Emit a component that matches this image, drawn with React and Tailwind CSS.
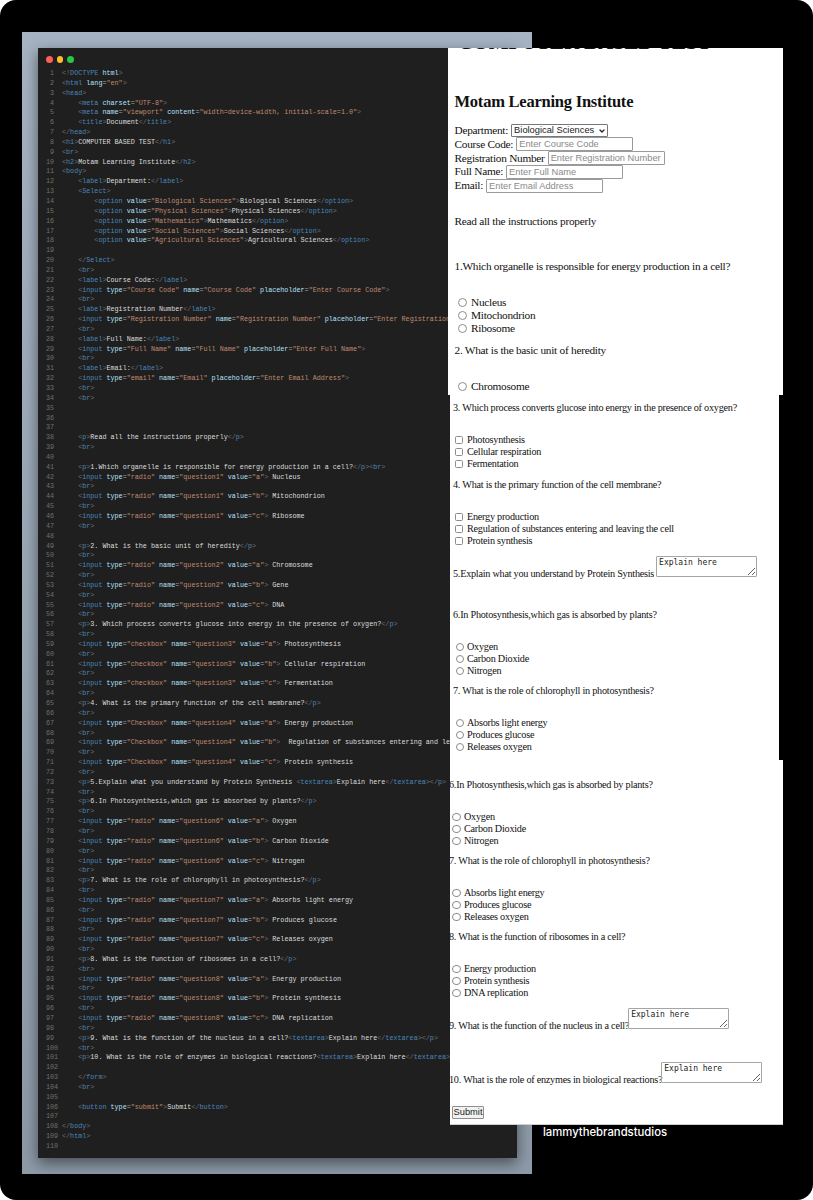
import React from 'react';
import { ChevronDown } from 'lucide-react';

const code = `<!DOCTYPE html>
<html lang="en">
<head>
    <meta charset="UTF-8">
    <meta name="viewport" content="width=device-width, initial-scale=1.0">
    <title>Document</title>
</head>
<h1>COMPUTER BASED TEST</h1>
<br>
<h2>Motam Learning Institute</h2>
<body>
    <label>Department:</label>
    <Select>
        <option value="Biological Sciences">Biological Sciences</option>
        <option value="Physical Sciences">Physical Sciences</option>
        <option value="Mathematics">Mathematics</option>
        <option value="Social Sciences">Social Sciences</option>
        <option value="Agricultural Sciences">Agricultural Sciences</option>

    </Select>
    <br>
    <label>Course Code:</label>
    <input type="Course Code" name="Course Code" placeholder="Enter Course Code">
    <br>
    <label>Registration Number</label>
    <input type="Registration Number" name="Registration Number" placeholder="Enter Registration Number">
    <br>
    <label>Full Name:</label>
    <input type="Full Name" name="Full Name" placeholder="Enter Full Name">
    <br>
    <label>Email:</label>
    <input type="email" name="Email" placeholder="Enter Email Address">
    <br>
    <br>



    <p>Read all the instructions properly</p>
    <br>

    <p>1.Which organelle is responsible for energy production in a cell?</p><br>
    <input type="radio" name="question1" value="a"> Nucleus
    <br>
    <input type="radio" name="question1" value="b"> Mitochondrion
    <br>
    <input type="radio" name="question1" value="c"> Ribosome
    <br>

    <p>2. What is the basic unit of heredity</p>
    <br>
    <input type="radio" name="question2" value="a"> Chromosome
    <br>
    <input type="radio" name="question2" value="b"> Gene
    <br>
    <input type="radio" name="question2" value="c"> DNA
    <br>
    <p>3. Which process converts glucose into energy in the presence of oxygen?</p>
    <br>
    <input type="checkbox" name="question3" value="a"> Photosynthesis
    <br>
    <input type="checkbox" name="question3" value="b"> Cellular respiration
    <br>
    <input type="checkbox" name="question3" value="c"> Fermentation
    <br>
    <p>4. What is the primary function of the cell membrane?</p>
    <br>
    <input type="Checkbox" name="question4" value="a"> Energy production
    <br>
    <input type="Checkbox" name="question4" value="b">  Regulation of substances entering and leaving the cell
    <br>
    <input type="Checkbox" name="question4" value="c"> Protein synthesis
    <br>
    <p>5.Explain what you understand by Protein Synthesis <textarea>Explain here</textarea></p>
    <br>
    <p>6.In Photosynthesis,which gas is absorbed by plants?</p>
    <br>
    <input type="radio" name="question6" value="a"> Oxygen
    <br>
    <input type="radio" name="question6" value="b"> Carbon Dioxide
    <br>
    <input type="radio" name="question6" value="c"> Nitrogen
    <br>
    <p>7. What is the role of chlorophyll in photosynthesis?</p>
    <br>
    <input type="radio" name="question7" value="a"> Absorbs light energy
    <br>
    <input type="radio" name="question7" value="b"> Produces glucose
    <br>
    <input type="radio" name="question7" value="c"> Releases oxygen
    <br>
    <p>8. What is the function of ribosomes in a cell?</p>
    <br>
    <input type="radio" name="question8" value="a"> Energy production
    <br>
    <input type="radio" name="question8" value="b"> Protein synthesis
    <br>
    <input type="radio" name="question8" value="c"> DNA replication
    <br>
    <p>9. What is the function of the nucleus in a cell?<textarea>Explain here</textarea></p>
    <br>
    <p>10. What is the role of enzymes in biological reactions?<textarea>Explain here</textarea></p>

    </form>
    <br>

    <button type="submit">Submit</button>

</body>
</html>
`.split('\n');

const Attrs = ({ text }) =>
  (text.match(/"[^"]*"|[\w-]+|\s+|=/g) || []).map((t, i) => {
    if (t[0] === '"') return <span key={i} className="text-[#c08a70]">{t}</span>;
    if (/^[\w-]/.test(t)) return <span key={i} className="text-[#b5e1fb]">{t}</span>;
    return <span key={i} className="text-[#a8a8a8]">{t}</span>;
  });

const CodeLine = ({ line }) => {
  const parts = [...line.matchAll(/(<[!/]?)([A-Za-z0-9]+)([^<>]*)(>)|[^<]+/g)];
  return parts.map((m, i) =>
    m[1] ? (
      <span key={i}>
        <span className="text-[#707070]">{m[1]}</span>
        <span className="text-[#4a86ba]">{m[2]}</span>
        <Attrs text={m[3]} />
        <span className="text-[#707070]">{m[4]}</span>
      </span>
    ) : (
      <span key={i} className="text-[#dcdcdc]">{m[0]}</span>
    )
  );
};

const CodeWindow = () => (
  <div className="w-[479px] h-[1110px] bg-[#1f1f1f] overflow-hidden shadow-[0_5px_14px_rgba(0,0,0,0.5)] pt-[8px] pl-[8px]">
    <div className="flex gap-[4px] h-[7px]">
      <span className="w-[6.5px] h-[6.5px] rounded-full bg-[#ff5f57]" />
      <span className="w-[6.5px] h-[6.5px] rounded-full bg-[#febc2e]" />
      <span className="w-[6.5px] h-[6.5px] rounded-full bg-[#28c840]" />
    </div>
    <div className="mt-[6px] font-['Liberation_Mono',monospace] text-[6.74px] leading-[9.845px]">
      {code.map((line, i) => (
        <div key={i} className="flex gap-[8px] h-[9.845px] whitespace-pre">
          <span className="w-[8px] shrink-0 text-right text-[#6f6f6f]">{i + 1}</span>
          <span><CodeLine line={line} /></span>
        </div>
      ))}
    </div>
  </div>
);

const Option = ({ type = 'radio', label, boxClass, rowClass }) => (
  <div className={`flex items-center ${rowClass}`}>
    <input
      type={type}
      tabIndex={-1}
      className={`appearance-none shrink-0 bg-white border border-[#8c8c8c] ${type === 'radio' ? 'rounded-full' : 'rounded-[1.5px]'} ${boxClass}`}
    />
    <span>{label}</span>
  </div>
);

const Options = ({ type, items, boxClass, rowClass, className }) => (
  <div className={className}>
    {items.map((label) => (
      <Option key={label} type={type} label={label} boxClass={boxClass} rowClass={rowClass} />
    ))}
  </div>
);

const Field = ({ label, placeholder }) => (
  <div className="flex items-center h-[13.8px]">
    <span>{label}</span>
    <input
      placeholder={placeholder}
      tabIndex={-1}
      className="ml-[3px] w-[117px] h-[14px] border border-[#9a9a9a] rounded-[1px] px-[2px] font-['Liberation_Sans',sans-serif] text-[9.3px] tracking-normal placeholder:text-[#8a8a8a]"
    />
  </div>
);

const Explain = ({ className = '' }) => (
  <textarea
    readOnly
    tabIndex={-1}
    defaultValue="Explain here"
    className={`shrink-0 mb-[3px] w-[101px] h-[21px] border border-[#a5a5a5] rounded-[1px] px-[2px] py-0 font-['DejaVu_Sans_Mono',monospace] text-[8px] leading-[11px] tracking-normal text-[#222] ${className}`}
  />
);

const radioTop = 'w-[9px] h-[9px] m-0 ml-[3.5px] mr-[4px]';

const SheetTop = () => (
  <div className="absolute left-[448px] top-[48px] w-[335px] h-[347px] bg-white overflow-hidden font-['Liberation_Serif',serif] text-[11.3px] tracking-[-0.26px] text-[#111] pl-[6.5px]">
    <h1 className="-mt-[18.6px] pl-[3px] h-[27px] font-bold text-[21.2px] leading-[27px] whitespace-nowrap">COMPUTER BASED TEST</h1>
    <h2 className="mt-[35.6px] font-bold text-[16.5px] tracking-[-0.23px] leading-[20px]">Motam Learning Institute</h2>
    <div className="mt-[11.5px]">
      <div className="flex items-center h-[13.8px]">
        <span>Department:</span>
        <div className="relative ml-[3px] w-[97px] h-[13px]">
          <select tabIndex={-1} className="block appearance-none w-full h-full pl-[2px] border border-[#777] rounded-[1px] font-['Liberation_Sans',sans-serif] text-[9.3px] tracking-normal leading-none text-[#222]">
            <option>Biological Sciences</option>
          </select>
          <ChevronDown size={8} strokeWidth={4} className="absolute right-[2px] top-[3px] text-[#222]" />
        </div>
      </div>
      <Field label="Course Code:" placeholder="Enter Course Code" />
      <Field label="Registration Number" placeholder="Enter Registration Number" />
      <Field label="Full Name:" placeholder="Enter Full Name" />
      <Field label="Email:" placeholder="Enter Email Address" />
    </div>
    <p className="mt-[21.5px] leading-[14px]">Read all the instructions properly</p>
    <p className="mt-[31px] leading-[14px]">1.Which organelle is responsible for energy production in a cell?</p>
    <Options className="mt-[23px]" items={['Nucleus', 'Mitochondrion', 'Ribosome']} boxClass={radioTop} rowClass="h-[13.2px]" />
    <p className="mt-[7px] leading-[14px]">2. What is the basic unit of heredity</p>
    <Options className="mt-[23px]" items={['Chromosome']} boxClass={radioTop} rowClass="h-[13.2px]" />
  </div>
);

const SheetMiddle = () => {
  const row = 'h-[12px]';
  const box = 'w-[8px] h-[8px] m-0 ml-[2px] mr-[4px]';
  const radio = 'w-[8.5px] h-[8.5px] m-0 ml-[2.5px] mr-[3px]';
  return (
    <div className="absolute left-[450px] top-[395px] w-[329px] h-[365px] bg-white overflow-hidden font-['Liberation_Serif',serif] text-[10.2px] tracking-[-0.24px] text-[#111] pl-[3px]">
      <p className="mt-[7px] leading-[12px]">3. Which process converts glucose into energy in the presence of oxygen?</p>
      <Options className="mt-[20px]" type="checkbox" items={['Photosynthesis', 'Cellular respiration', 'Fermentation']} boxClass={box} rowClass={row} />
      <p className="mt-[9px] leading-[12px]">4. What is the primary function of the cell membrane?</p>
      <Options className="mt-[20px]" type="checkbox" items={['Energy production', 'Regulation of substances entering and leaving the cell', 'Protein synthesis']} boxClass={box} rowClass={row} />
      <div className="mt-[9px] flex items-end gap-[2px] leading-[12px]">
        <span className="whitespace-nowrap">5.Explain what you understand by Protein Synthesis</span>
        <Explain />
      </div>
      <p className="mt-[29px] leading-[12px]">6.In Photosynthesis,which gas is absorbed by plants?</p>
      <Options className="mt-[20px]" items={['Oxygen', 'Carbon Dioxide', 'Nitrogen']} boxClass={radio} rowClass={row} />
      <p className="mt-[8px] leading-[12px]">7. What is the role of chlorophyll in photosynthesis?</p>
      <Options className="mt-[20px]" items={['Absorbs light energy', 'Produces glucose', 'Releases oxygen']} boxClass={radio} rowClass={row} />
    </div>
  );
};

const SheetBottom = () => {
  const row = 'h-[12px]';
  const box = 'w-[8.5px] h-[8.5px] m-0 ml-[2px] mr-[3.5px]';
  return (
    <div className="absolute left-[450px] top-[760px] w-[333px] h-[365px] bg-white overflow-hidden border-b border-[#cfcfcf] font-['Liberation_Serif',serif] text-[10.2px] tracking-[-0.24px] text-[#111]">
      <p className="mt-[19px] -ml-[1px] leading-[12px]">6.In Photosynthesis,which gas is absorbed by plants?</p>
      <Options className="mt-[20px]" items={['Oxygen', 'Carbon Dioxide', 'Nitrogen']} boxClass={box} rowClass={row} />
      <p className="mt-[8px] -ml-[1px] leading-[12px]">7. What is the role of chlorophyll in photosynthesis?</p>
      <Options className="mt-[20px]" items={['Absorbs light energy', 'Produces glucose', 'Releases oxygen']} boxClass={box} rowClass={row} />
      <p className="mt-[8px] -ml-[1px] leading-[12px]">8. What is the function of ribosomes in a cell?</p>
      <Options className="mt-[20px]" items={['Energy production', 'Protein synthesis', 'DNA replication']} boxClass={box} rowClass={row} />
      <div className="mt-[9px] -ml-[1px] flex items-end leading-[12px]">
        <span className="whitespace-nowrap">9. What is the function of the nucleus in a cell?</span>
        <Explain className="-ml-[1px]" />
      </div>
      <div className="mt-[30px] -ml-[1px] flex items-end leading-[12px]">
        <span className="whitespace-nowrap">10. What is the role of enzymes in biological reactions?</span>
        <Explain className="-ml-[1px]" />
      </div>
      <button tabIndex={-1} className="mt-[20px] ml-[2px] block w-[32px] h-[12.5px] border border-[#8f8f8f] rounded-[1px] bg-[#f2f2f2] font-['Liberation_Sans',sans-serif] text-[9.3px] tracking-normal leading-none text-[#222]">Submit</button>
    </div>
  );
};

export default function App() {
  return (
    <div className="w-[813px] h-[1200px] bg-white">
      <div className="relative w-full h-full bg-black rounded-[16px] overflow-hidden flex items-end pl-[22px] pb-[26px]">
        <div className="w-[510px] h-[1142px] p-[16px] bg-gradient-to-b from-[#a6b3c2] to-[#8d9aa8]">
          <CodeWindow />
        </div>
        <span className="ml-[11px] mb-[35px] font-['Inter',sans-serif] font-medium text-[11.3px] leading-[14px] text-white">lammythebrandstudios</span>
        <SheetTop />
        <SheetMiddle />
        <SheetBottom />
      </div>
    </div>
  );
}
